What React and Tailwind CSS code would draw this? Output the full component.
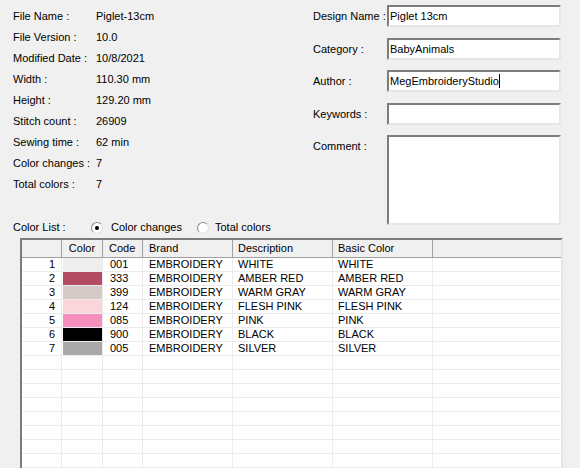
import React from 'react';

const info = [
  ['File Name :', 'Piglet-13cm'],
  ['File Version :', '10.0'],
  ['Modified Date :', '10/8/2021'],
  ['Width :', '110.30 mm'],
  ['Height :', '129.20 mm'],
  ['Stitch count :', '26909'],
  ['Sewing time :', '62 min'],
  ['Color changes :', '7'],
  ['Total colors :', '7'],
];

const colors = [
  { n: 1, swatch: 'bg-[#eeeeee]', code: '001', brand: 'EMBROIDERY', desc: 'WHITE', basic: 'WHITE' },
  { n: 2, swatch: 'bg-[#b34b62]', code: '333', brand: 'EMBROIDERY', desc: 'AMBER RED', basic: 'AMBER RED' },
  { n: 3, swatch: 'bg-[#d5cac6]', code: '399', brand: 'EMBROIDERY', desc: 'WARM GRAY', basic: 'WARM GRAY' },
  { n: 4, swatch: 'bg-[#fbd5dc]', code: '124', brand: 'EMBROIDERY', desc: 'FLESH PINK', basic: 'FLESH PINK' },
  { n: 5, swatch: 'bg-[#f58fbe]', code: '085', brand: 'EMBROIDERY', desc: 'PINK', basic: 'PINK' },
  { n: 6, swatch: 'bg-[#000000]', code: '900', brand: 'EMBROIDERY', desc: 'BLACK', basic: 'BLACK' },
  { n: 7, swatch: 'bg-[#a9a9a9]', code: '005', brand: 'EMBROIDERY', desc: 'SILVER', basic: 'SILVER' },
];

const cols = 'grid grid-cols-[40px_41px_40px_90px_100px_100px_1fr]';

// sunken win32 edit box
const Field = ({ className = '', children }) => (
  <div className={`w-[174px] bg-white border-t-2 border-l-2 border-t-[#7c7c7c] border-l-[#7c7c7c] border-b-2 border-r-2 border-b-[#e6e6e6] border-r-[#e6e6e6] pl-[1px] flex items-center ${className}`}>
    {children}
  </div>
);

const Radio = ({ checked }) => (
  <span className="w-[12px] h-[12px] rounded-full bg-white border border-t-[#8a8a8a] border-l-[#8a8a8a] border-b-[#e0e0e0] border-r-[#e0e0e0] flex items-center justify-center">
    {checked && <span className="w-[4px] h-[4px] rounded-full bg-black" />}
  </span>
);

export default function App() {
  return (
    <div className="w-[580px] h-[468px] overflow-hidden bg-[#f0f0f0] text-[11px] text-black font-['Liberation_Sans',Arial,sans-serif] leading-none">
      <div className="flex h-[220px]">
        <div className="w-[313px] pl-[13px] pt-[6px]">
          {info.map(([k, v]) => (
            <div key={k} className="flex items-center h-[21px]">
              <span className="w-[83px]">{k}</span>
              <span>{v}</span>
            </div>
          ))}
        </div>
        <div className="pt-[5px]">
          <div className="flex items-center">
            <span className="w-[74px]">Design Name :</span>
            <Field className="h-[22px]">Piglet 13cm</Field>
          </div>
          <div className="flex items-center mt-[11px]">
            <span className="w-[74px]">Category :</span>
            <Field className="h-[22px]">BabyAnimals</Field>
          </div>
          <div className="flex items-center mt-[10px]">
            <span className="w-[74px]">Author :</span>
            <Field className="h-[22px]">
              MegEmbroideryStudio<span className="w-[1px] h-[14px] bg-black" />
            </Field>
          </div>
          <div className="flex items-center mt-[11px]">
            <span className="w-[74px]">Keywords :</span>
            <Field className="h-[22px]" />
          </div>
          <div className="flex items-start mt-[10px]">
            <span className="w-[74px] pt-[6px]">Comment :</span>
            <Field className="h-[90px]" />
          </div>
        </div>
      </div>

      <div className="flex items-center h-[15px] pl-[13px]">
        <span className="w-[78px]">Color List :</span>
        <Radio checked />
        <span className="ml-[8px] w-[86px]">Color changes</span>
        <Radio />
        <span className="ml-[6px]">Total colors</span>
      </div>

      <div className="ml-[20px] mt-[3px] w-[543px] h-[240px] bg-white border-t-2 border-l-2 border-t-[#7c7c7c] border-l-[#7c7c7c] border-r-2 border-r-[#e6e6e6] overflow-hidden">
        <div className={`${cols} h-[18px] bg-[#f0f0f0] border-b border-b-[#a0a0a0]`}>
          <div className="border-r border-r-[#a0a0a0]" />
          <div className="border-r border-r-[#a0a0a0] flex items-center justify-center">Color</div>
          <div className="border-r border-r-[#a0a0a0] flex items-center pl-[6px]">Code</div>
          <div className="border-r border-r-[#a0a0a0] flex items-center pl-[6px]">Brand</div>
          <div className="border-r border-r-[#a0a0a0] flex items-center pl-[5px]">Description</div>
          <div className="border-r border-r-[#a0a0a0] flex items-center pl-[5px]">Basic Color</div>
          <div />
        </div>
        {colors.map((c) => (
          <div key={c.n} className={`${cols} h-[14px] border-b border-b-[#ececec]`}>
            <div className="border-r border-r-[#ececec] flex items-center justify-end pr-[6px]">{c.n}</div>
            <div className="border-r border-r-[#ececec] pl-[1px]">
              <div className={`h-full w-full ${c.swatch}`} />
            </div>
            <div className="border-r border-r-[#ececec] flex items-center pl-[7px]">{c.code}</div>
            <div className="border-r border-r-[#ececec] flex items-center pl-[6px]">{c.brand}</div>
            <div className="border-r border-r-[#ececec] flex items-center pl-[5px]">{c.desc}</div>
            <div className="border-r border-r-[#ececec] flex items-center pl-[5px]">{c.basic}</div>
            <div />
          </div>
        ))}
        {Array.from({ length: 9 }).map((_, i) => (
          <div key={i} className={`${cols} h-[14px] border-b border-b-[#ececec]`}>
            {Array.from({ length: 6 }).map((_, j) => (
              <div key={j} className="border-r border-r-[#ececec]" />
            ))}
            <div />
          </div>
        ))}
      </div>
    </div>
  );
}
